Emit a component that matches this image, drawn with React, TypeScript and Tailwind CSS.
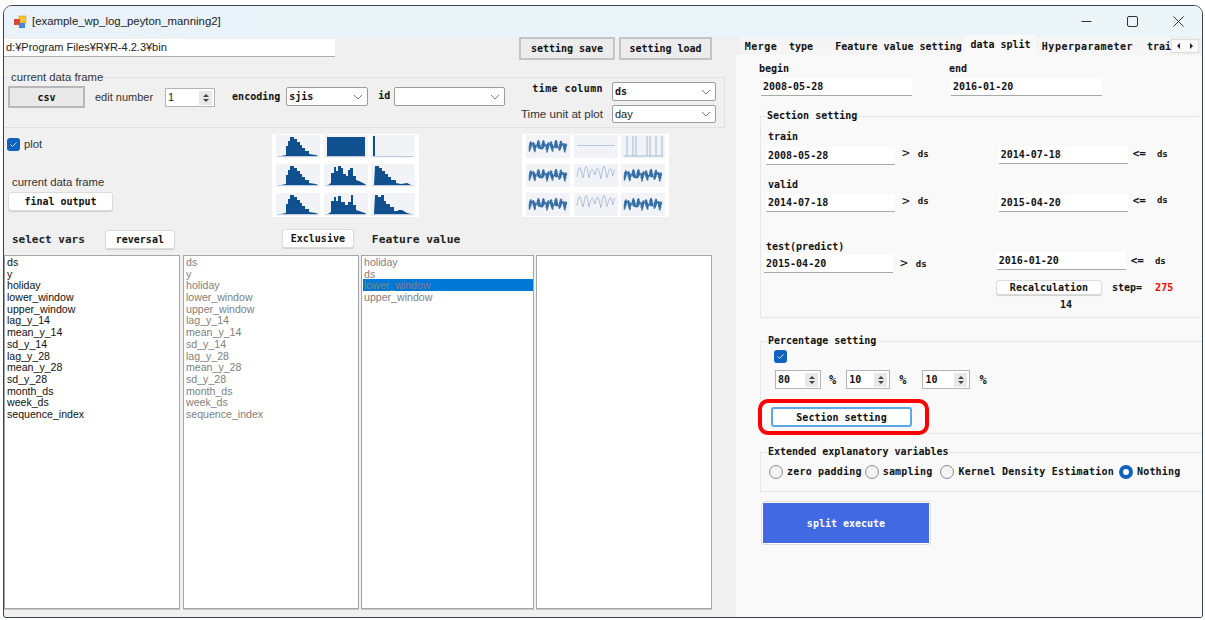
import { ReactNode } from "react";

const bold = "font-['DejaVu_Sans_Mono',monospace] text-[10px] font-bold text-[#111] whitespace-nowrap";
const dsText = "font-['DejaVu_Sans_Mono',monospace] text-[9px] font-bold text-[#111]";
const gtText = "font-['DejaVu_Sans_Mono',monospace] text-[13px] leading-[14px] text-[#111]";
const leText = "font-['DejaVu_Sans_Mono',monospace] text-[11px] leading-[14px] font-bold text-[#111] whitespace-nowrap";
const pctText = "font-['DejaVu_Sans_Mono',monospace] text-[12px] font-bold text-[#111]";
const btn = "flex items-center justify-center bg-white rounded-[3px] border border-[#dcdcdc] shadow-[0_1px_1px_#cfcfcf]";
const vars = ["ds", "y", "holiday", "lower_window", "upper_window", "lag_y_14", "mean_y_14", "sd_y_14", "lag_y_28", "mean_y_28", "sd_y_28", "month_ds", "week_ds", "sequence_index"];

// 히스토그램 썸네일 모양
const peak = "M5 21 L10 20 L10 11 L12 11 L12 6 L14 6 L14 2 L18 2 L18 4 L21 4 L21 7 L24 7 L24 10 L26 10 L26 13 L29 13 L29 16 L33 16 L33 19 L40 20 L42 21Z";
const hists = [
  peak,
  "M3 2 L41 2 L41 21 L3 21Z",
  "M2 1 L4 1 L4 21 L2 21Z",
  peak,
  "M4 21 L7 19 L7 9 L10 9 L10 3 L12 3 L12 7 L14 7 L14 2 L17 2 L17 4 L19 4 L19 10 L22 10 L22 12 L24 12 L24 6 L26 6 L26 4 L29 4 L29 12 L32 12 L32 16 L35 17 L41 20 L42 21Z",
  "M3 21 L4 2 L8 2 L8 4 L11 4 L11 7 L14 7 L14 10 L17 10 L17 13 L20 13 L20 16 L25 16 L25 19 L30 20 L36 19 L40 21Z",
  peak,
  "M4 21 L7 19 L7 8 L10 8 L10 4 L12 4 L12 8 L14 8 L14 3 L17 3 L17 9 L21 9 L21 12 L24 12 L24 9 L27 9 L27 2 L29 2 L29 12 L32 12 L32 17 L35 18 L41 20 L42 21Z",
  "M3 21 L4 2 L7 2 L7 4 L10 4 L10 2 L13 2 L13 8 L15 8 L15 11 L19 11 L19 14 L23 14 L23 18 L27 18 L27 17 L31 17 L36 20 L40 21Z",
];

function wave(amp: number, step: number, swing: number) {
  const pts: string[] = [];
  for (let x = 3; x <= 41; x += step) {
    const season = -Math.abs(Math.sin((x - 3) / 1.9)) * swing + 2;
    const jitter = Math.sin(x * 9.7) * amp;
    pts.push(`${x},${(12 + season + jitter).toFixed(1)}`);
  }
  return pts.join(" ");
}

function Hist({ d }: { d: string }) {
  return (
    <svg viewBox="0 0 44 23" className="h-[23px] w-[44px] bg-[#f2f3f6]">
      <path d={d} fill="#10508f" />
      <line x1="2" x2="42" y1="21.5" y2="21.5" stroke="#8aa5c2" strokeWidth="0.5" />
    </svg>
  );
}

function Series({ kind }: { kind: "dense" | "thin" | "flat" | "spike" }) {
  return (
    <svg viewBox="0 0 44 23" className="h-[23px] w-[44px] bg-[#f2f3f6]">
      {kind === "dense" && <polyline points={wave(4.2, 0.35, 5)} fill="none" stroke="#1d5c9c" strokeWidth="0.6" />}
      {kind === "thin" && <polyline points={wave(1.6, 0.7, 10)} fill="none" stroke="#7d9fc4" strokeWidth="0.6" />}
      {kind === "flat" && <line x1="3" x2="41" y1="10.5" y2="10.5" stroke="#b5c8dc" strokeWidth="1" />}
      {kind === "spike" && (
        <path d="M6 1V21M12 1V21M15 1V21M26 1V21M29 1V21M35 1V21M41 1V21M3 21H42" stroke="#8fb0d0" strokeWidth="0.8" fill="none" />
      )}
    </svg>
  );
}

function ThumbGrid({ children }: { children: ReactNode }) {
  return (
    <div className="grid h-[83px] w-[147px] grid-cols-[44px_44px_44px] grid-rows-[23px_23px_23px] content-between justify-between bg-white px-[4px] py-[1px]">
      {children}
    </div>
  );
}

function Chevron() {
  return (
    <svg width="10" height="6" viewBox="0 0 10 6" className="ml-auto mr-[4px] shrink-0">
      <path d="M1 1l4 4 4-4" fill="none" stroke="#777" strokeWidth="1" />
    </svg>
  );
}

function Combo({ value, className, strong }: { value?: string; className: string; strong?: boolean }) {
  return (
    <div className={`flex items-center rounded-[2px] border border-[#9c9c9c] bg-white pl-[2px] ${className}`}>
      <span className={strong ? bold : "text-[11px] text-[#222]"}>{value}</span>
      <Chevron />
    </div>
  );
}

function Spinner({ value, className, strong }: { value: string; className: string; strong?: boolean }) {
  return (
    <div className={`flex h-[19px] items-center border border-[#b4b4b4] bg-white pl-[2px] ${className}`}>
      <span className={strong ? bold : "text-[11px] text-[#222]"}>{value}</span>
      <div className="ml-auto mr-[2px] flex h-[14px] w-[13px] flex-col items-center justify-center gap-[2px] bg-[#e8e8e8]">
        <div className="h-0 w-0 border-x-[3px] border-b-[3px] border-x-transparent border-b-[#444]" />
        <div className="h-0 w-0 border-x-[3px] border-t-[3px] border-x-transparent border-t-[#444]" />
      </div>
    </div>
  );
}

function Check() {
  return (
    <div className="flex h-[13px] w-[13px] items-center justify-center rounded-[3px] bg-[#0f62c0]">
      <svg width="9" height="9" viewBox="0 0 9 9">
        <path d="M1.5 4.5l2 2 4-4" fill="none" stroke="#cfe3f7" strokeWidth="1" />
      </svg>
    </div>
  );
}

function ListBox({ items, selected, className, dim }: { items?: string[]; selected?: string; className: string; dim?: boolean }) {
  return (
    <div className={`h-[354px] border border-[#a3a7ab] bg-white pl-[1px] shadow-[0_1px_0_#c4c8cc] ${className}`}>
      {items?.map((v) => (
        <div
          key={v}
          className={`h-[11.7px] pl-[1px] text-[10.6px] leading-[12px] ${dim ? "text-[#808080]" : "text-[#111]"} ${v === selected ? "bg-[#0078d7] text-[#5a6b7c]" : ""}`}
        >
          {v}
        </div>
      ))}
    </div>
  );
}

function DateBox({ value, className }: { value: string; className: string }) {
  return (
    <div className={`flex h-[18px] w-[129px] items-center border-b border-[#a8a8a8] bg-white pl-[2px] ${className}`}>
      <span className={bold}>{value}</span>
    </div>
  );
}

function Radio({ on, label, className }: { on?: boolean; label: string; className: string }) {
  return (
    <div className={`flex items-center gap-[4px] ${className}`}>
      {on ? (
        <div className="h-[14px] w-[14px] rounded-full border-[4px] border-[#0f62c0] bg-white" />
      ) : (
        <div className="h-[14px] w-[14px] rounded-full border border-[#8a8a8a] bg-[#f4f4f4]" />
      )}
      <span className={`tracking-[0.2px] ${bold}`}>{label}</span>
    </div>
  );
}

function Tab({ label, className }: { label: string; className: string }) {
  return (
    <div className={`flex h-[18px] items-center justify-center bg-[#f5f5f5] ${className}`}>
      <span className={`pt-[1px] ${bold}`}>{label}</span>
    </div>
  );
}

export default function App() {
  return (
    <div className="h-[620px] w-[1205px] overflow-hidden bg-white pl-[3px] pt-[5px] font-['Liberation_Sans',sans-serif]">
      <div className="flex h-[613px] w-[1200px] flex-col overflow-hidden rounded-t-[9px] rounded-b-[3px] border border-[#37424c] bg-[#f0f0f0]">
        {/* 타이틀 바 */}
        <div className="flex h-[31px] shrink-0 items-center bg-gradient-to-r from-[#e8f2f8] to-[#ecf6f9] pl-[9px]">
          <svg width="14" height="14" viewBox="0 0 14 14">
            <rect x="6" y="1" width="7" height="7" fill="#f2c230" stroke="#c9962a" strokeWidth="0.5" />
            <rect x="1" y="4" width="6" height="6" fill="#d8483a" />
            <rect x="6" y="8" width="6" height="5" fill="#4d82d8" />
          </svg>
          <span className="ml-[5px] text-[11.4px] text-[#222]">[example_wp_log_peyton_manning2]</span>
          <div className="ml-auto mr-[18px] flex items-center gap-[35px]">
            <svg width="11" height="11" viewBox="0 0 11 11"><path d="M0.5 5.5h10" stroke="#333" /></svg>
            <svg width="11" height="11" viewBox="0 0 11 11"><rect x="0.5" y="0.5" width="10" height="10" rx="1.5" fill="none" stroke="#333" /></svg>
            <svg width="11" height="11" viewBox="0 0 11 11"><path d="M0.5 0.5l10 10M10.5 0.5l-10 10" stroke="#333" /></svg>
          </div>
        </div>

        <div className="flex min-h-0 flex-1">
          {/* 왼쪽 영역 */}
          <div className="w-[732px] shrink-0">
            <div className="flex h-[23px] pr-[24px]">
              <div className="mt-[2px] flex h-[18px] w-[331px] items-center border-b border-[#b0b0b0] bg-white pl-[2px] text-[11px] text-[#222]">
                d:¥Program Files¥R¥R-4.2.3¥bin
              </div>
              <div className={`ml-auto flex h-[23px] w-[96px] items-center justify-center border-2 border-[#c4c4c4] bg-[#ececec] ${bold}`}>setting save</div>
              <div className={`ml-[4px] flex h-[23px] w-[93px] items-center justify-center border-2 border-[#c4c4c4] bg-[#ececec] ${bold}`}>setting load</div>
            </div>

            <fieldset className="mt-[10px] h-[58px] w-[721px] border-y border-r border-[#e2e2e2]">
              <legend className="ml-[7px] h-[14px] px-0 text-[11.3px] leading-[14px] text-[#333]">current data frame</legend>
              <div className="flex items-start">
                <div className={`ml-[4px] mt-[2px] flex h-[22px] w-[77px] items-center justify-center border-2 border-[#b8b8b8] bg-[#e9e9e9] ${bold}`}>csv</div>
                <span className="ml-[10px] mt-[6px] text-[11px] leading-[14px] text-[#333]">edit number</span>
                <Spinner value="1" className="ml-[12px] mt-[4px] w-[50px]" />
                <span className={`ml-[17px] mt-[5px] ${bold}`}>encoding</span>
                <Combo value="sjis" strong className="ml-[6px] mt-[3px] h-[19px] w-[82px]" />
                <span className={`ml-[10px] mt-[4px] ${bold}`}>id</span>
                <Combo className="ml-[4px] mt-[3px] h-[19px] w-[111px]" />
                <div className="ml-auto mr-[8px] -mt-[2px] grid grid-cols-[auto_104px] items-center gap-x-[9px] gap-y-[4px]">
                  <span className={`-mt-[6px] justify-self-end tracking-[0.4px] ${bold}`}>time column</span>
                  <Combo value="ds" strong className="h-[19px]" />
                  <span className="justify-self-end text-[11.6px] text-[#333]">Time unit at plot</span>
                  <Combo value="day" className="h-[18px]" />
                </div>
              </div>
            </fieldset>

            <div className="flex h-[101px] pt-[6px]">
              <div className="w-[268px] shrink-0">
                <div className="ml-[3px] mt-[4px] flex items-center gap-[4px]">
                  <Check />
                  <span className="text-[11.3px] leading-[13px] text-[#333]">plot</span>
                </div>
                <div className="ml-[8px] mt-[24px] text-[11.3px] leading-[14px] text-[#333]">current data frame</div>
                <div className={`ml-[4px] mt-[3px] h-[19px] w-[105px] ${btn} ${bold}`}>final output</div>
              </div>
              <ThumbGrid>
                {hists.map((d, i) => (
                  <Hist key={i} d={d} />
                ))}
              </ThumbGrid>
              <div className="ml-[103px]">
                <ThumbGrid>
                  <Series kind="dense" />
                  <Series kind="flat" />
                  <Series kind="spike" />
                  <Series kind="dense" />
                  <Series kind="thin" />
                  <Series kind="dense" />
                  <Series kind="dense" />
                  <Series kind="thin" />
                  <Series kind="dense" />
                </ThumbGrid>
              </div>
            </div>

            <div className="flex h-[26px] items-start">
              <span className="ml-[8px] mt-[3px] font-['DejaVu_Sans_Mono',monospace] text-[11px] font-bold text-[#222]">select vars</span>
              <div className={`ml-[20px] mt-[1px] h-[19px] w-[70px] ${btn} ${bold}`}>reversal</div>
              <div className={`ml-[107px] h-[19px] w-[72px] ${btn} ${bold}`}>Exclusive</div>
              <span className="ml-[18px] mt-[3px] font-['DejaVu_Sans_Mono',monospace] text-[11.3px] font-bold text-[#222]">Feature value</span>
            </div>

            <div className="flex">
              <ListBox items={vars} className="w-[176px]" />
              <ListBox items={vars} dim className="ml-[3px] w-[176px]" />
              <ListBox items={["holiday", "ds", "lower_window", "upper_window"]} selected="lower_window" dim className="ml-[2px] w-[173px]" />
              <ListBox className="ml-[2px] w-[176px]" />
            </div>
          </div>

          {/* 오른쪽 탭 영역 */}
          <div className="flex min-w-0 flex-1 flex-col">
            <div className="flex h-[18px] shrink-0 items-end pl-[4px]">
              <Tab label="Merge" className="w-[42px] tracking-[0.5px]" />
              <Tab label="type" className="ml-[1px] w-[45px] pr-[9px]" />
              <Tab label="Feature value setting" className="w-[137px] pl-[4px]" />
              <div className="flex h-[20px] w-[71px] items-center justify-center bg-[#f9f9f9] pb-[1px]">
                <span className={bold}>data split</span>
              </div>
              <Tab label="Hyperparameter" className="w-[103px] tracking-[0.5px]" />
              <div className="flex h-[18px] w-[32px] items-center justify-start overflow-hidden bg-[#f5f5f5] pl-[8px] pt-[1px]">
                <span className={bold}>trai</span>
              </div>
              <div className="flex h-[14px] w-[28px] items-center justify-around self-center border border-[#dddddd] bg-[#fafafa]">
                <div className="h-0 w-0 border-y-[3px] border-r-[3px] border-y-transparent border-r-[#222]" />
                <div className="h-0 w-0 border-y-[3px] border-l-[3px] border-y-transparent border-l-[#222]" />
              </div>
            </div>

            <div className="min-h-0 flex-1 bg-[#f9f9f9]">
              <div className="flex pt-[8px]">
                <div className="ml-[23px] w-[190px]">
                  <div className={`h-[12px] leading-[12px] ${bold}`}>begin</div>
                  <DateBox value="2008-05-28" className="mt-[3px] ml-[2px] w-[151px]" />
                </div>
                <div>
                  <div className={`h-[12px] leading-[12px] ${bold}`}>end</div>
                  <DateBox value="2016-01-20" className="mt-[3px] ml-[2px] w-[151px]" />
                </div>
              </div>

              <fieldset className="ml-[24px] mt-[13px] h-[209px] w-[439px] border border-r-0 border-[#e6e6e6]">
                <legend className={`ml-[6px] h-[14px] leading-[14px] ${bold}`}>Section setting</legend>
                <div className={`ml-[7px] mt-[7px] h-[14px] leading-[14px] ${bold}`}>train</div>
                <div className="mt-[2px] flex items-start">
                  <DateBox value="2008-05-28" className="ml-[5px] mt-[1px]" />
                  <span className={`ml-[7px] ${gtText}`}>&gt;</span>
                  <span className={`ml-[8px] mt-[2px] ${dsText}`}>ds</span>
                  <DateBox value="2014-07-18" className="ml-[70px]" />
                  <span className={`ml-[5px] mt-[1px] ${leText}`}>&lt;=</span>
                  <span className={`ml-[11px] mt-[2px] ${dsText}`}>ds</span>
                </div>
                <div className={`ml-[7px] mt-[13px] h-[14px] leading-[14px] ${bold}`}>valid</div>
                <div className="mt-[2px] flex items-start">
                  <DateBox value="2014-07-18" className="ml-[5px]" />
                  <span className={`ml-[7px] ${gtText}`}>&gt;</span>
                  <span className={`ml-[8px] mt-[1px] ${dsText}`}>ds</span>
                  <DateBox value="2015-04-20" className="ml-[70px]" />
                  <span className={`ml-[5px] ${leText}`}>&lt;=</span>
                  <span className={`ml-[11px] ${dsText}`}>ds</span>
                </div>
                <div className={`ml-[5px] mt-[28px] h-[14px] leading-[14px] ${bold}`}>test(predict)</div>
                <div className="-mt-[3px] flex items-start">
                  <DateBox value="2015-04-20" className="ml-[3px] mt-[4px]" />
                  <span className={`ml-[7px] mt-[5px] ${gtText}`}>&gt;</span>
                  <span className={`ml-[8px] mt-[7px] ${dsText}`}>ds</span>
                  <DateBox value="2016-01-20" className="ml-[70px] mt-[1px]" />
                  <span className={`ml-[5px] mt-[3px] ${leText}`}>&lt;=</span>
                  <span className={`ml-[11px] mt-[4px] ${dsText}`}>ds</span>
                </div>
                <div className="mt-[7px] flex items-center">
                  <div className={`ml-[235px] h-[15px] w-[106px] ${btn} ${bold}`}>Recalculation</div>
                  <span className={`ml-[10px] ${bold}`}>step=</span>
                  <span className={`ml-[13px] ${bold} text-[#ff0000]`}>275</span>
                </div>
                <div className={`ml-[299px] mt-[2px] ${bold}`}>14</div>
              </fieldset>

              <fieldset className="ml-[24px] mt-[16px] h-[100px] w-[442px] border-b border-t border-l border-[#e6e6e6]">
                <legend className={`ml-[7px] h-[14px] leading-[14px] ${bold}`}>Percentage setting</legend>
                <div className="ml-[13px] mt-[2px]">
                  <Check />
                </div>
                <div className="mt-[7px] flex items-center">
                  <Spinner value="80" strong className="ml-[14px] w-[46px]" />
                  <span className={`ml-[8px] ${pctText}`}>%</span>
                  <Spinner value="10" strong className="ml-[10px] w-[44px]" />
                  <span className={`ml-[9px] ${pctText}`}>%</span>
                  <Spinner value="10" strong className="ml-[16px] w-[48px]" />
                  <span className={`ml-[9px] ${pctText}`}>%</span>
                </div>
                <div className="ml-[-3px] mt-[10px] flex h-[36px] w-[171px] items-center justify-center rounded-[10px] border-[4px] border-[#ff0000] pr-[4px]">
                  <div className={`flex h-[20px] w-[141px] shrink-0 items-center justify-center rounded-[3px] border-2 border-[#5aa9e6] bg-white ${bold}`}>Section setting</div>
                </div>
              </fieldset>

              <fieldset className="ml-[24px] mt-[11px] h-[47px] w-[442px] border-y border-l border-[#e6e6e6]">
                <legend className={`ml-[7px] h-[14px] leading-[14px] ${bold}`}>Extended explanatory variables</legend>
                <div className="mt-[5px] flex items-center">
                  <Radio label="zero padding" className="ml-[8px]" />
                  <Radio label="sampling" className="ml-[3px]" />
                  <Radio label="Kernel Density Estimation" className="ml-[8px]" />
                  <Radio on label="Nothing" className="ml-[5px]" />
                </div>
              </fieldset>

              <div className="ml-[25px] mt-[9px] flex h-[44px] w-[170px] items-center justify-center rounded-[3px] border border-[#dddddd] bg-white">
                <div className="flex h-[40px] w-[166px] items-center justify-center bg-[#4169e1] font-['DejaVu_Sans_Mono',monospace] text-[10px] font-bold text-white">
                  split execute
                </div>
              </div>
            </div>
          </div>
        </div>
      </div>
    </div>
  );
}
